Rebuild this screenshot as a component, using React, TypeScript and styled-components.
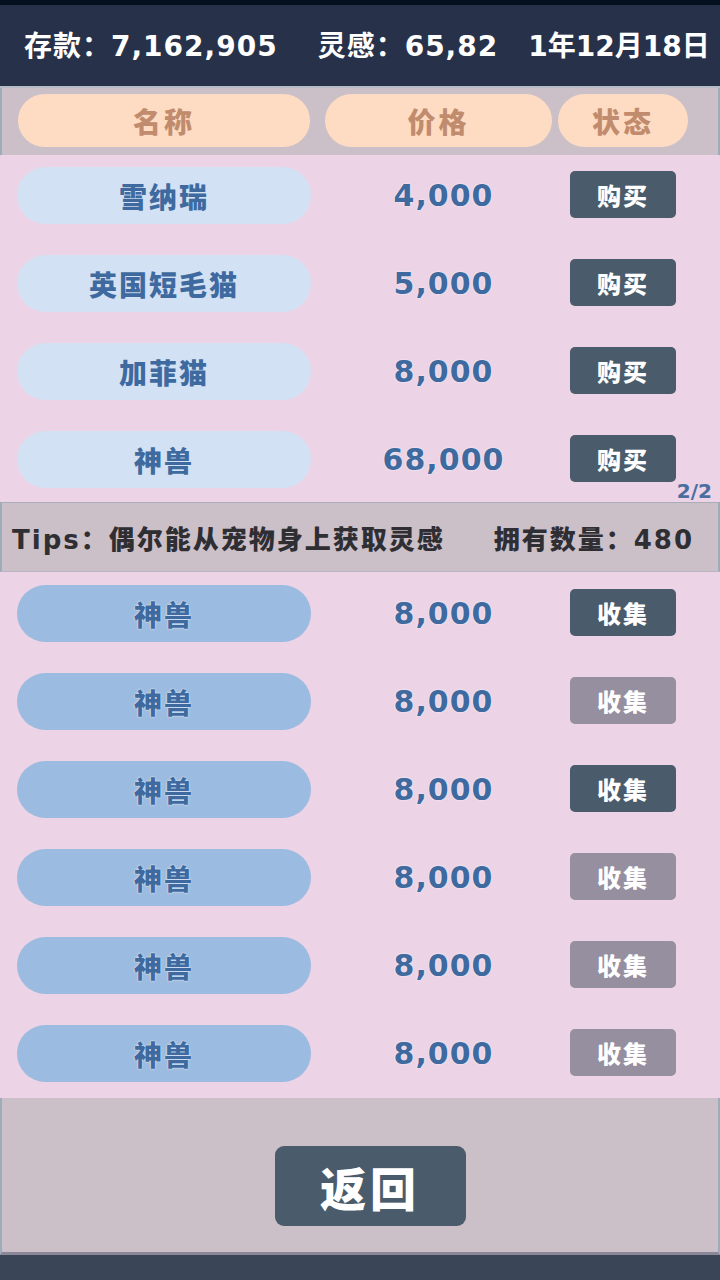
import React from "react";
import styled, { createGlobalStyle } from "styled-components";

type Pet = { name: string; price: string };
type Owned = { name: string; price: string; ready: boolean };

const shop: Pet[] = [
  { name: "雪纳瑞", price: "4,000" },
  { name: "英国短毛猫", price: "5,000" },
  { name: "加菲猫", price: "8,000" },
  { name: "神兽", price: "68,000" },
];

const owned: Owned[] = [
  { name: "神兽", price: "8,000", ready: true },
  { name: "神兽", price: "8,000", ready: false },
  { name: "神兽", price: "8,000", ready: true },
  { name: "神兽", price: "8,000", ready: false },
  { name: "神兽", price: "8,000", ready: false },
  { name: "神兽", price: "8,000", ready: false },
];

export default function App() {
  return (
    <>
      <GlobalStyle />
      <Screen>
        <TopStrip />
        <StatusBar>
          <Stat $ls={1}>存款：7,162,905</Stat>
          <Stat $ls={1} $ml={40}>灵感：65,82</Stat>
          <Stat $ml={30}>1年12月18日</Stat>
        </StatusBar>
        <HeadRow>
          <HeadPill $w={292}>名称</HeadPill>
          <HeadPill $w={227} $ml={15}>价格</HeadPill>
          <HeadPill $w={130} $ml={6}>状态</HeadPill>
        </HeadRow>

        <ShopList>
          {shop.map((p) => (
            <Row key={p.name}>
              <NamePill>{p.name}</NamePill>
              <Price>{p.price}</Price>
              <ActionButton>购买</ActionButton>
            </Row>
          ))}
          <PageLabel>2/2</PageLabel>
        </ShopList>

        <TipsBar>
          <span>Tips：偶尔能从宠物身上获取灵感</span>
          <span>拥有数量：480</span>
        </TipsBar>

        <OwnedList>
          {owned.map((p, i) => (
            <Row key={i}>
              <NamePill $owned>{p.name}</NamePill>
              <Price>{p.price}</Price>
              <ActionButton $disabled={!p.ready}>收集</ActionButton>
            </Row>
          ))}
        </OwnedList>

        <Footer>
          <BackButton>返回</BackButton>
        </Footer>
        <BottomStrip />
      </Screen>
    </>
  );
}

const GlobalStyle = createGlobalStyle`
  body {
    margin: 0;
    background: #3a4558;
    font-family: "DejaVu Sans", "Noto Sans CJK SC", sans-serif;
  }
`;

const Screen = styled.div`
  width: 720px;
  height: 1280px;
  display: flex;
  flex-direction: column;
  overflow: hidden;
`;

const TopStrip = styled.div`
  height: 5px;
  background: #03101d;
`;

const StatusBar = styled.div`
  height: 83px;
  box-sizing: border-box;
  background: #27324a;
  border-bottom: 2px solid #b6bcc8;
  display: flex;
  align-items: center;
  padding: 0 0 4px 24px;
  color: #ffffff;
  font-size: 28px;
  font-weight: 700;
  white-space: nowrap;
`;

const Stat = styled.span<{ $ml?: number; $ls?: number }>`
  margin-left: ${(p) => p.$ml ?? 0}px;
  letter-spacing: ${(p) => p.$ls ?? 0}px;
`;

const HeadRow = styled.div`
  height: 67px;
  box-sizing: border-box;
  background: #cbbfc8;
  border-left: 2px solid #9eabb8;
  border-right: 2px solid #9eabb8;
  display: flex;
  align-items: center;
  padding: 0 0 2px 16px;
`;

const HeadPill = styled.div<{ $w: number; $ml?: number }>`
  width: ${(p) => p.$w}px;
  margin-left: ${(p) => p.$ml ?? 0}px;
  height: 53px;
  border-radius: 27px;
  background: #fedcc4;
  color: #c18b6d;
  font-size: 28px;
  font-weight: 900;
  letter-spacing: 3px;
  display: flex;
  align-items: center;
  justify-content: center;
`;

const ShopList = styled.div`
  position: relative;
  height: 347px;
  box-sizing: border-box;
  background: #ecd3e5;
  padding-top: 12px;
  display: flex;
  flex-direction: column;
  gap: 31px;
`;

const OwnedList = styled(ShopList)`
  height: 526px;
  padding-top: 13px;
`;

const Row = styled.div`
  display: grid;
  grid-template-columns: 294px 1fr 106px;
  align-items: center;
  padding: 0 44px 0 17px;
  height: 57px;
`;

const NamePill = styled.div<{ $owned?: boolean }>`
  height: 57px;
  border-radius: 29px;
  background: ${(p) => (p.$owned ? "#9bbbe0" : "#d2e2f4")};
  color: #3f6a9f;
  font-size: 28px;
  font-weight: 900;
  letter-spacing: 2px;
  display: flex;
  align-items: center;
  justify-content: center;
  text-shadow: ${(p) =>
    p.$owned ? "0 0 2px #e8eef8, 0 0 1px #e8eef8" : "none"};
`;

const Price = styled.div`
  text-align: center;
  padding-left: 6px;
  color: #3f6a9f;
  font-size: 30px;
  font-weight: 700;
  letter-spacing: 1px;
  text-shadow: 0 0 2px #f2f4fb, 0 0 1px #f2f4fb;
`;

const ActionButton = styled.div<{ $disabled?: boolean }>`
  height: 47px;
  margin-top: -2px;
  border-radius: 5px;
  background: ${(p) => (p.$disabled ? "#958f9f" : "#4a5b6b")};
  color: #ffffff;
  font-size: 24px;
  font-weight: 900;
  letter-spacing: 2px;
  display: flex;
  align-items: center;
  justify-content: center;
`;

const PageLabel = styled.div`
  position: absolute;
  right: 8px;
  bottom: -1px;
  color: #4a6ea0;
  font-size: 20px;
  font-weight: 700;
`;

const TipsBar = styled.div`
  height: 70px;
  box-sizing: border-box;
  background: #cbbfc8;
  border-top: 1px solid #a9acb8;
  border-bottom: 1px solid #b9b4c2;
  border-left: 2px solid #9eabb8;
  border-right: 2px solid #9eabb8;
  display: flex;
  align-items: center;
  justify-content: space-between;
  padding: 0 24px 0 10px;
  color: #2e2e33;
  font-size: 26px;
  font-weight: 900;
  letter-spacing: 2px;
  white-space: nowrap;
`;

const Footer = styled.div`
  height: 157px;
  box-sizing: border-box;
  background: #cbbfc8;
  border-left: 2px solid #9eabb8;
  border-right: 2px solid #9eabb8;
  border-bottom: 3px solid #8c8798;
  display: flex;
  justify-content: center;
  padding: 48px 0 0 20px;
`;

const BackButton = styled.div`
  width: 191px;
  height: 80px;
  border-radius: 9px;
  background: #4a5b6b;
  color: #ffffff;
  font-size: 46px;
  font-weight: 900;
  letter-spacing: 4px;
  display: flex;
  align-items: center;
  justify-content: center;
`;

const BottomStrip = styled.div`
  flex: 1;
  background: #3a4558;
`;
